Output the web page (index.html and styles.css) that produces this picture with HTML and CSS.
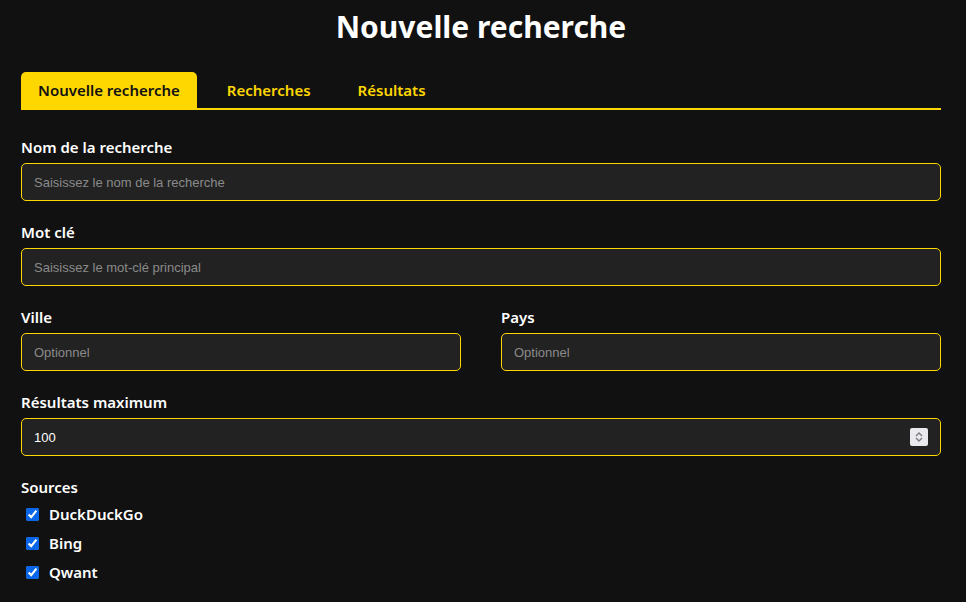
FILE: index.html
```html
<!DOCTYPE html>
<html lang="fr">
<head>
<meta charset="utf-8">
<title>Nouvelle recherche</title>
<link rel="stylesheet" href="styles.css">
</head>
<body>
<div class="container">
  <h1 class="title">Nouvelle recherche</h1>
  <nav class="tabs">
    <button class="tab active">Nouvelle recherche</button>
    <button class="tab">Recherches</button>
    <button class="tab">Résultats</button>
  </nav>
  <form class="form">
    <div class="group">
      <label class="label">Nom de la recherche</label>
      <input class="input" type="text" placeholder="Saisissez le nom de la recherche">
    </div>
    <div class="group">
      <label class="label">Mot clé</label>
      <input class="input" type="text" placeholder="Saisissez le mot-clé principal">
    </div>
    <div class="row">
      <div class="group">
        <label class="label">Ville</label>
        <input class="input" type="text" placeholder="Optionnel">
      </div>
      <div class="group">
        <label class="label">Pays</label>
        <input class="input" type="text" placeholder="Optionnel">
      </div>
    </div>
    <div class="group">
      <label class="label">Résultats maximum</label>
      <div class="input number"><span>100</span><span class="spin"><svg width="10" height="12" viewBox="0 0 10 12"><path d="M2 5 L5 2 L8 5 M2 7 L5 10 L8 7" fill="none" stroke="#7a7a80" stroke-width="1.4"/></svg></span></div>
    </div>
    <div class="group sources">
      <span class="label">Sources</span>
      <label class="check"><input type="checkbox" checked> DuckDuckGo</label>
      <label class="check"><input type="checkbox" checked> Bing</label>
      <label class="check"><input type="checkbox" checked> Qwant</label>
    </div>
  </form>
</div>
</body>
</html>
```

FILE: styles.css
```css
html, body {
  margin: 0;
  padding: 0;
  background: #111111;
  color: #ffffff;
  font-family: "Noto Sans", "Open Sans", sans-serif;
}
.container {
  width: 920px;
  margin: 0 0 0 21px;
}
.title {
  margin: 0;
  padding-top: 6px;
  height: 66px;
  text-align: center;
  font-size: 30px;
  font-weight: 700;
  line-height: 42px;
}
.tabs {
  display: flex;
  gap: 13px;
  border-bottom: 2px solid #ffd700;
}
.tab {
  height: 36px;
  padding: 0 17px;
  background: transparent;
  border: none;
  border-radius: 5px 5px 0 0;
  color: #ffd700;
  font-family: inherit;
  font-size: 15px;
  font-weight: 600;
  cursor: pointer;
}
.tab.active {
  background: #ffd700;
  color: #111111;
}
.form {
  display: flex;
  flex-direction: column;
  gap: 21px;
  padding-top: 27px;
}
.group {
  display: flex;
  flex-direction: column;
  gap: 6px;
}
.row {
  display: grid;
  grid-template-columns: 1fr 1fr;
  gap: 40px;
}
.label {
  font-size: 15px;
  font-weight: 600;
  line-height: 20px;
}
.input {
  box-sizing: border-box;
  height: 38px;
  padding: 0 12px;
  background: #222222;
  border: 1px solid #ffd700;
  border-radius: 5px;
  color: #ffffff;
  font-family: "Liberation Sans", Arial, sans-serif;
  font-size: 13px;
  outline: none;
}
.input::placeholder {
  color: #8a8a8a;
}
.number {
  display: flex;
  align-items: center;
  justify-content: space-between;
  padding-right: 12px;
}
.spin {
  display: flex;
  align-items: center;
  justify-content: center;
  width: 18px;
  height: 18px;
  background: #e9e9ee;
  border-radius: 2px;
}
.sources {
  gap: 6px;
}
.check {
  display: flex;
  align-items: center;
  gap: 10px;
  padding-left: 5px;
  font-size: 15px;
  font-weight: 600;
  line-height: 23px;
}
.check input {
  width: 13px;
  height: 13px;
  margin: 0;
  accent-color: #0a66e8;
}
```
